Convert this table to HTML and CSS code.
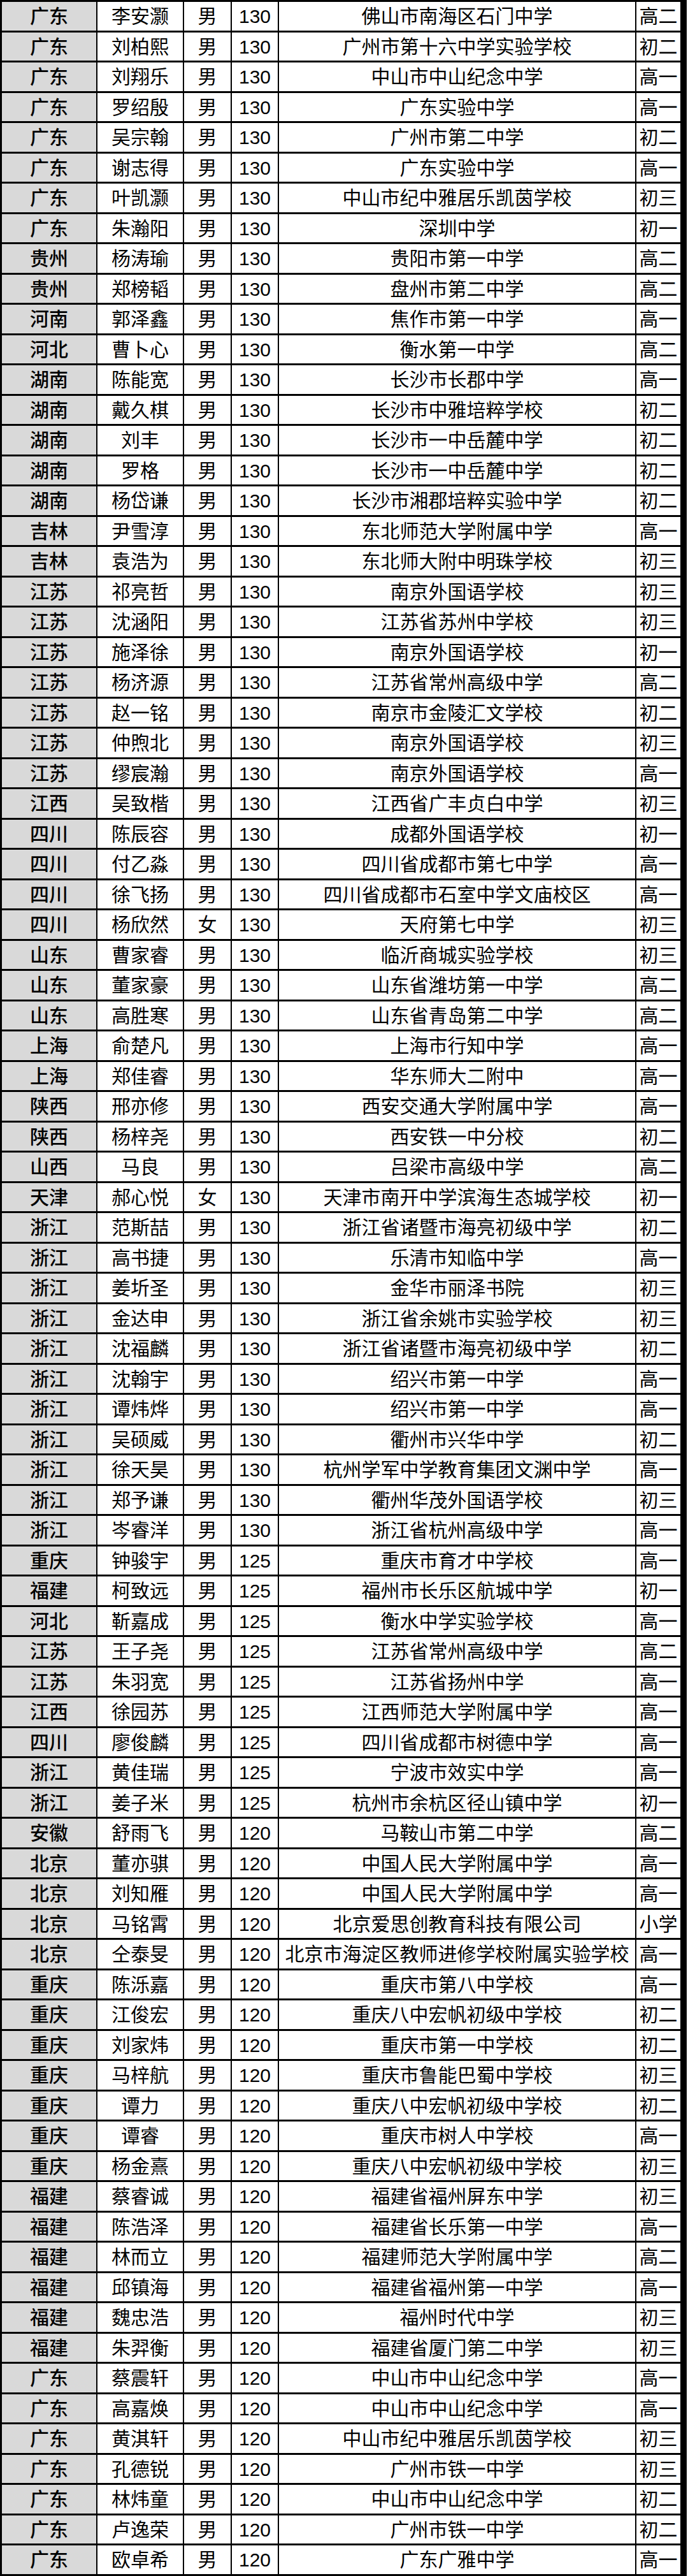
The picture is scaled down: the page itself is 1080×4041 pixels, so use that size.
FILE: index.html
```html
<!DOCTYPE html>
<html lang="zh-CN">
<head>
<meta charset="utf-8">
<title>成绩名单</title>
<link rel="stylesheet" href="styles.css">
</head>
<body>
<div class="sheet" id="sheet"></div>
<script src="app.js"></script>
</body>
</html>
```
FILE: app.js
```js
const data = `广东 李安灏 男 130 佛山市南海区石门中学 高二
广东 刘柏熙 男 130 广州市第十六中学实验学校 初二
广东 刘翔乐 男 130 中山市中山纪念中学 高一
广东 罗绍殷 男 130 广东实验中学 高一
广东 吴宗翰 男 130 广州市第二中学 初二
广东 谢志得 男 130 广东实验中学 高一
广东 叶凯灏 男 130 中山市纪中雅居乐凯茵学校 初三
广东 朱瀚阳 男 130 深圳中学 初一
贵州 杨涛瑜 男 130 贵阳市第一中学 高二
贵州 郑榜韬 男 130 盘州市第二中学 高二
河南 郭泽鑫 男 130 焦作市第一中学 高一
河北 曹卜心 男 130 衡水第一中学 高二
湖南 陈能宽 男 130 长沙市长郡中学 高一
湖南 戴久棋 男 130 长沙市中雅培粹学校 初二
湖南 刘丰 男 130 长沙市一中岳麓中学 初二
湖南 罗格 男 130 长沙市一中岳麓中学 初二
湖南 杨岱谦 男 130 长沙市湘郡培粹实验中学 初二
吉林 尹雪淳 男 130 东北师范大学附属中学 高一
吉林 袁浩为 男 130 东北师大附中明珠学校 初三
江苏 祁亮哲 男 130 南京外国语学校 初三
江苏 沈涵阳 男 130 江苏省苏州中学校 初三
江苏 施泽徐 男 130 南京外国语学校 初一
江苏 杨济源 男 130 江苏省常州高级中学 高二
江苏 赵一铭 男 130 南京市金陵汇文学校 初二
江苏 仲煦北 男 130 南京外国语学校 初三
江苏 缪宸瀚 男 130 南京外国语学校 高一
江西 吴致楷 男 130 江西省广丰贞白中学 初三
四川 陈辰容 男 130 成都外国语学校 初一
四川 付乙淼 男 130 四川省成都市第七中学 高一
四川 徐飞扬 男 130 四川省成都市石室中学文庙校区 高一
四川 杨欣然 女 130 天府第七中学 初三
山东 曹家睿 男 130 临沂商城实验学校 初三
山东 董家豪 男 130 山东省潍坊第一中学 高二
山东 高胜寒 男 130 山东省青岛第二中学 高二
上海 俞楚凡 男 130 上海市行知中学 高一
上海 郑佳睿 男 130 华东师大二附中 高一
陕西 邢亦修 男 130 西安交通大学附属中学 高一
陕西 杨梓尧 男 130 西安铁一中分校 初二
山西 马良 男 130 吕梁市高级中学 高二
天津 郝心悦 女 130 天津市南开中学滨海生态城学校 初一
浙江 范斯喆 男 130 浙江省诸暨市海亮初级中学 初二
浙江 高书捷 男 130 乐清市知临中学 高一
浙江 姜圻圣 男 130 金华市丽泽书院 初三
浙江 金达申 男 130 浙江省余姚市实验学校 初三
浙江 沈福麟 男 130 浙江省诸暨市海亮初级中学 初二
浙江 沈翰宇 男 130 绍兴市第一中学 高一
浙江 谭炜烨 男 130 绍兴市第一中学 高一
浙江 吴硕威 男 130 衢州市兴华中学 初二
浙江 徐天昊 男 130 杭州学军中学教育集团文渊中学 高一
浙江 郑予谦 男 130 衢州华茂外国语学校 初三
浙江 岑睿洋 男 130 浙江省杭州高级中学 高一
重庆 钟骏宇 男 125 重庆市育才中学校 高一
福建 柯致远 男 125 福州市长乐区航城中学 初一
河北 靳嘉成 男 125 衡水中学实验学校 高一
江苏 王子尧 男 125 江苏省常州高级中学 高二
江苏 朱羽宽 男 125 江苏省扬州中学 高一
江西 徐园苏 男 125 江西师范大学附属中学 高一
四川 廖俊麟 男 125 四川省成都市树德中学 高一
浙江 黄佳瑞 男 125 宁波市效实中学 高一
浙江 姜子米 男 125 杭州市余杭区径山镇中学 初一
安徽 舒雨飞 男 120 马鞍山市第二中学 高二
北京 董亦骐 男 120 中国人民大学附属中学 高一
北京 刘知雁 男 120 中国人民大学附属中学 高一
北京 马铭霄 男 120 北京爱思创教育科技有限公司 小学
北京 仝泰旻 男 120 北京市海淀区教师进修学校附属实验学校 高一
重庆 陈泺嘉 男 120 重庆市第八中学校 高一
重庆 江俊宏 男 120 重庆八中宏帆初级中学校 初二
重庆 刘家炜 男 120 重庆市第一中学校 初二
重庆 马梓航 男 120 重庆市鲁能巴蜀中学校 初三
重庆 谭力 男 120 重庆八中宏帆初级中学校 初二
重庆 谭睿 男 120 重庆市树人中学校 高一
重庆 杨金熹 男 120 重庆八中宏帆初级中学校 初三
福建 蔡睿诚 男 120 福建省福州屏东中学 初三
福建 陈浩泽 男 120 福建省长乐第一中学 高一
福建 林而立 男 120 福建师范大学附属中学 高二
福建 邱镇海 男 120 福建省福州第一中学 高一
福建 魏忠浩 男 120 福州时代中学 初三
福建 朱羿衡 男 120 福建省厦门第二中学 初三
广东 蔡震轩 男 120 中山市中山纪念中学 高一
广东 高嘉焕 男 120 中山市中山纪念中学 高一
广东 黄淇轩 男 120 中山市纪中雅居乐凯茵学校 初三
广东 孔德锐 男 120 广州市铁一中学 初三
广东 林炜童 男 120 中山市中山纪念中学 初二
广东 卢逸荣 男 120 广州市铁一中学 初二
广东 欧卓希 男 120 广东广雅中学 高一`;

const cls = ['prov', 'name', 'sex', 'score', 'school', 'grade'];
const sheet = document.getElementById('sheet');
data.split('\n').forEach(line => {
  const row = document.createElement('div');
  row.className = 'row';
  line.trim().split(' ').forEach((v, i) => {
    const c = document.createElement('div');
    c.className = 'cell ' + cls[i];
    c.textContent = v;
    row.appendChild(c);
  });
  sheet.appendChild(row);
});
```
FILE: styles.css
```css
html, body {
  margin: 0;
  padding: 0;
  background: #ffffff;
}

.sheet {
  width: 1078px;
  box-sizing: border-box;
  border-left: 3px solid #000;
  border-right: 10px solid #000;
  border-top: 3px solid #000;
  font-family: "Liberation Sans", "Noto Sans CJK SC", sans-serif;
  font-size: 30px;
  color: #000;
}

.row {
  display: grid;
  grid-template-columns: 150px 136px 75px 74px 561px 69px;
  height: 47.5px;
  box-sizing: border-box;
  border-bottom: 3px solid #000;
}

.cell {
  display: flex;
  align-items: center;
  justify-content: center;
  box-sizing: border-box;
  border-right: 2px solid #000;
  white-space: nowrap;
  overflow: hidden;
  line-height: 1;
  padding-top: 2px;
}

.cell.grade {
  border-right: none;
}

.cell.prov {
  background: #d9d9d9;
  font-weight: 500;
}
```
